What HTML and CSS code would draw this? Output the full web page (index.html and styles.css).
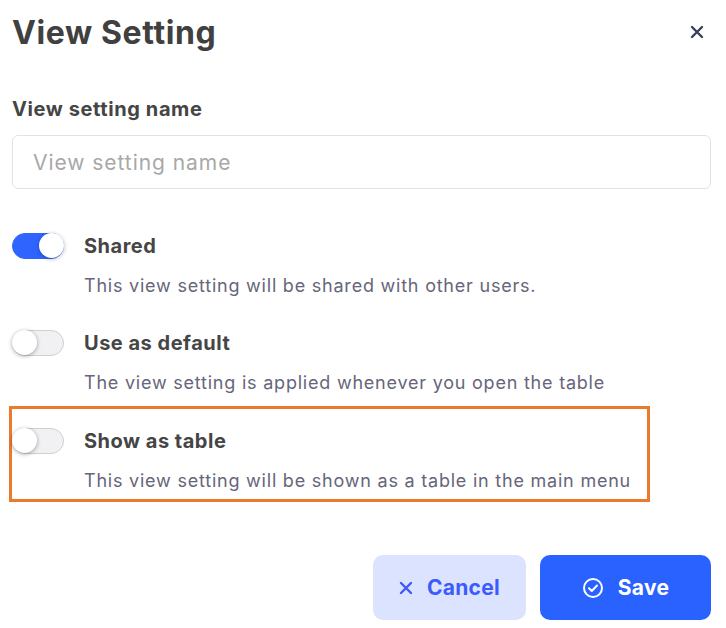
FILE: index.html
```html
<!DOCTYPE html>
<html>
<head>
<meta charset="utf-8">
<link rel="stylesheet" href="styles.css">
</head>
<body>
<div class="dialog">
  <div class="header">
    <h1 class="title">View Setting</h1>
    <button class="close" aria-label="Close">
      <svg width="14" height="14" viewBox="0 0 14 14"><path d="M2 2 L12 12 M12 2 L2 12" stroke="#3b3f5c" stroke-width="2.4" stroke-linecap="round"/></svg>
    </button>
  </div>
  <label class="field-label">View setting name</label>
  <div class="input">View setting name</div>

  <div class="option">
    <span class="toggle on"><span class="knob"></span></span>
    <div class="option-text">
      <div class="option-title">Shared</div>
      <div class="option-desc">This view setting will be shared with other users.</div>
    </div>
  </div>
  <div class="option">
    <span class="toggle"><span class="knob"></span></span>
    <div class="option-text">
      <div class="option-title">Use as default</div>
      <div class="option-desc">The view setting is applied whenever you open the table</div>
    </div>
  </div>
  <div class="option highlight">
    <span class="toggle"><span class="knob"></span></span>
    <div class="option-text">
      <div class="option-title">Show as table</div>
      <div class="option-desc">This view setting will be shown as a table in the main menu</div>
    </div>
  </div>

  <div class="actions">
    <button class="btn cancel">
      <svg width="14" height="14" viewBox="0 0 14 14"><path d="M2 2 L12 12 M12 2 L2 12" stroke="#3d5afe" stroke-width="2.4" stroke-linecap="round"/></svg>
      Cancel
    </button>
    <button class="btn save">
      <svg width="22" height="22" viewBox="0 0 22 22"><circle cx="11" cy="11" r="9" fill="none" stroke="#fff" stroke-width="2"/><path d="M7 11.2 L9.8 14 L15 8.5" fill="none" stroke="#fff" stroke-width="2" stroke-linecap="round" stroke-linejoin="round"/></svg>
      Save
    </button>
  </div>
</div>
</body>
</html>
```
FILE: styles.css
```css
* { box-sizing: border-box; }
body {
  margin: 0;
  background: #fff;
  font-family: Inter, "Noto Sans", sans-serif;
  color: #3f3f46;
}
.dialog {
  width: 726px;
  padding: 9px 15px 0 12px;
}
.header {
  display: flex;
  align-items: center;
  justify-content: space-between;
  height: 46px;
}
.title {
  margin: 0;
  font-size: 32px;
  font-weight: 700;
  color: #404040;
  letter-spacing: 0.6px;
}
.close {
  border: 0;
  background: none;
  padding: 0;
  margin-right: 7px;
  display: flex;
}
.field-label {
  display: block;
  margin-top: 42px;
  font-size: 20px;
  font-weight: 700;
  color: #454545;
  letter-spacing: 0.6px;
}
.input {
  margin-top: 14px;
  height: 54px;
  border: 1.5px solid #dfe3e8;
  border-radius: 6px;
  padding: 0 20px;
  display: flex;
  align-items: center;
  font-size: 21px;
  color: #a8a8a8;
  letter-spacing: 0.95px;
}
.option {
  display: flex;
  gap: 20px;
  align-items: flex-start;
  margin-top: 44px;
}
.option + .option { margin-top: 32px; }
.toggle {
  flex: none;
  position: relative;
  width: 52px;
  height: 26px;
  border-radius: 13px;
  background: #f1f1f3;
  border: 1.5px solid #cfcfd4;
  margin-top: 0;
}
.toggle .knob {
  position: absolute;
  top: -1px;
  left: -1px;
  width: 25px;
  height: 25px;
  border-radius: 50%;
  background: #fff;
  box-shadow: 0 1px 4px rgba(0,0,0,0.35);
}
.toggle.on {
  background: #2f64ff;
  border-color: #2f64ff;
}
.toggle.on .knob {
  left: auto;
  right: -1px;
  box-shadow: 0 1px 4px rgba(0,0,40,0.3);
}
.option-title {
  font-size: 20px;
  font-weight: 700;
  color: #454545;
  line-height: 26px;
  letter-spacing: 0.5px;
}
.option-desc {
  margin-top: 15px;
  font-size: 18px;
  color: #66667a;
  line-height: 24px;
  letter-spacing: 0.78px;
}
.highlight {
  margin-left: -3px;
  width: 641px;
  border: 3px solid #ec7a2c;
  padding: 19px 0 6px 0;
}
.option.highlight { margin-top: 11px; }
.actions {
  display: flex;
  justify-content: flex-end;
  gap: 14px;
  margin-top: 53px;
}
.btn {
  height: 65px;
  border: 0;
  border-radius: 10px;
  display: flex;
  align-items: center;
  justify-content: center;
  gap: 14px;
  font-family: Inter, "Noto Sans", sans-serif;
  font-size: 21px;
  font-weight: 700;
  letter-spacing: 0.3px;
}
.cancel {
  width: 153px;
  background: #dbe3ff;
  color: #3d5afe;
}
.save {
  width: 171px;
  background: #2962ff;
  color: #fff;
}
```
